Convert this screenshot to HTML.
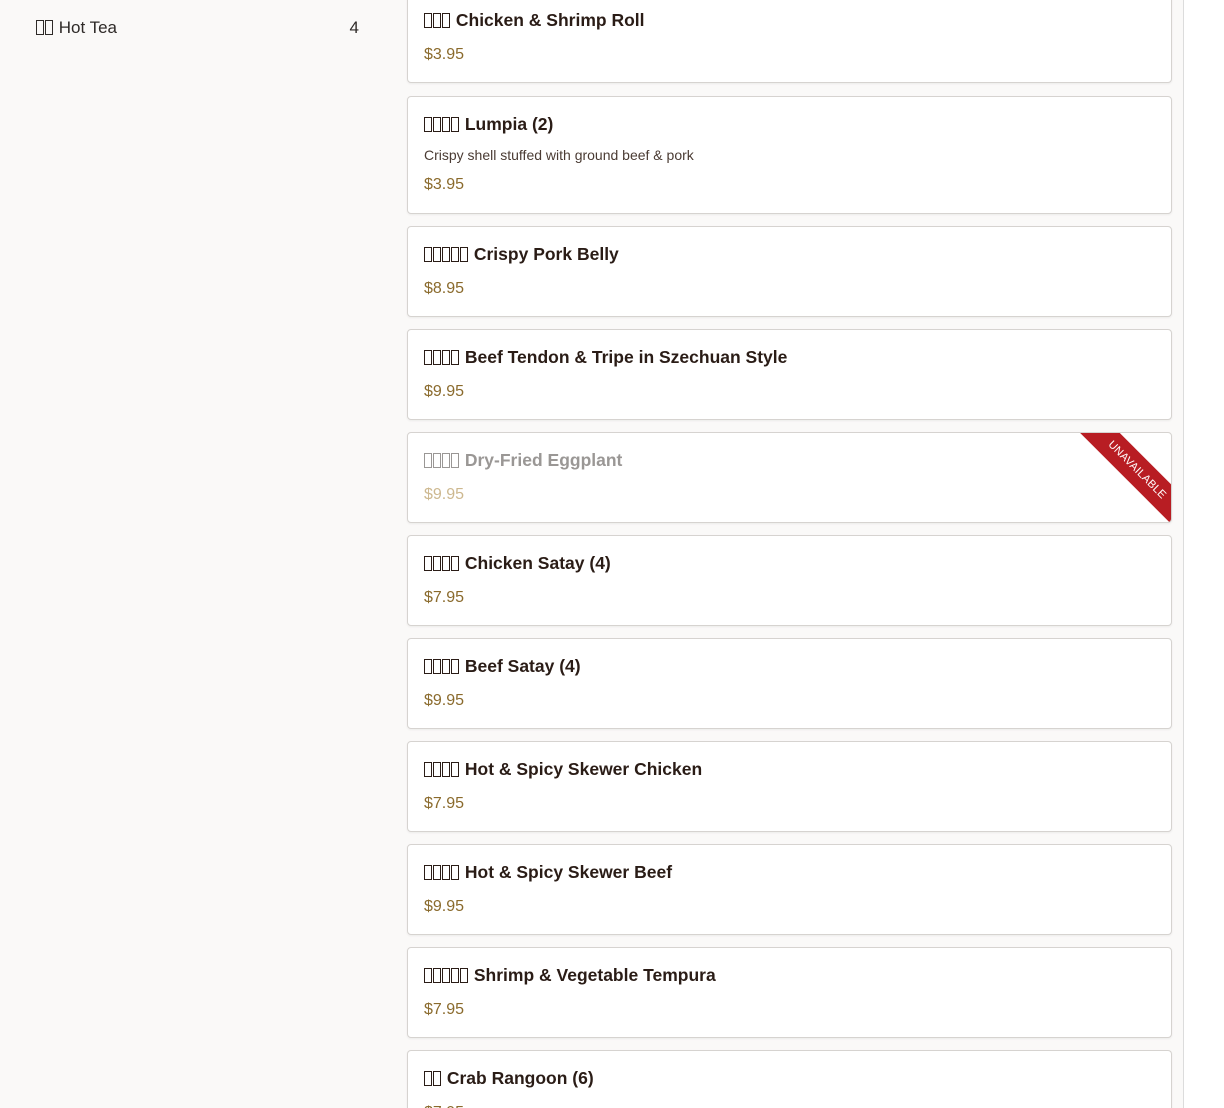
<!DOCTYPE html>
<html><head><meta charset="utf-8"><style>
html,body{margin:0;padding:0;}
body{width:1224px;height:1108px;overflow:hidden;background:#fff;font-family:"Liberation Sans","Noto Sans CJK SC",sans-serif;position:relative;}
.main{position:absolute;left:0;top:0;width:1183px;height:1108px;background:#faf9f8;border-right:1px solid #dcdcdc;}
.side{position:absolute;left:36px;top:18px;width:323px;font-size:17px;color:#2e2a28;}
.side .n{position:absolute;right:0;top:0;}
.t{display:inline-block;width:8px;height:15px;border:1px solid currentColor;box-sizing:border-box;margin-right:1px;vertical-align:-2px;}
.card{position:absolute;left:407px;width:765px;height:91px;box-sizing:border-box;background:#fff;border:1px solid #d6d3d0;border-radius:4px;overflow:hidden;box-shadow:0 1px 2px rgba(0,0,0,.06);}
.ti{position:absolute;left:16px;top:17px;font-size:17.5px;font-weight:bold;color:#2a1c16;white-space:nowrap;}
.pr{position:absolute;left:16px;top:53px;font-size:16px;color:#8a6a2c;}
.ds{position:absolute;left:16px;top:50px;font-size:14px;color:#4a3b33;}
.un .ti{color:#9a9795;}
.un .pr{color:#cdb88f;}
.rib{position:absolute;right:-46px;top:23px;width:160px;height:28px;background:#b81d23;color:#fff;font-size:11px;text-align:center;line-height:28px;transform:rotate(45deg);letter-spacing:.3px;}
</style></head><body>
<div class="main"></div>
<div class="side"><span class="t"></span><span class="t"></span> Hot Tea<span class="n">4</span></div>

<div class="card" style="top:-8px"><div class="ti"><span class="t"></span><span class="t"></span><span class="t"></span> Chicken &amp; Shrimp Roll</div><div class="pr">$3.95</div></div>
<div class="card" style="top:96px;height:118px"><div class="ti"><span class="t"></span><span class="t"></span><span class="t"></span><span class="t"></span> Lumpia (2)</div><div class="ds">Crispy shell stuffed with ground beef &amp; pork</div><div class="pr" style="top:79px">$3.95</div></div>
<div class="card" style="top:226px"><div class="ti"><span class="t"></span><span class="t"></span><span class="t"></span><span class="t"></span><span class="t"></span> Crispy Pork Belly</div><div class="pr">$8.95</div></div>
<div class="card" style="top:329px"><div class="ti"><span class="t"></span><span class="t"></span><span class="t"></span><span class="t"></span> Beef Tendon &amp; Tripe in Szechuan Style</div><div class="pr">$9.95</div></div>
<div class="card un" style="top:432px"><div class="ti"><span class="t"></span><span class="t"></span><span class="t"></span><span class="t"></span> Dry-Fried Eggplant</div><div class="pr">$9.95</div><div class="rib">UNAVAILABLE</div></div>
<div class="card" style="top:535px"><div class="ti"><span class="t"></span><span class="t"></span><span class="t"></span><span class="t"></span> Chicken Satay (4)</div><div class="pr">$7.95</div></div>
<div class="card" style="top:638px"><div class="ti"><span class="t"></span><span class="t"></span><span class="t"></span><span class="t"></span> Beef Satay (4)</div><div class="pr">$9.95</div></div>
<div class="card" style="top:741px"><div class="ti"><span class="t"></span><span class="t"></span><span class="t"></span><span class="t"></span> Hot &amp; Spicy Skewer Chicken</div><div class="pr">$7.95</div></div>
<div class="card" style="top:844px"><div class="ti"><span class="t"></span><span class="t"></span><span class="t"></span><span class="t"></span> Hot &amp; Spicy Skewer Beef</div><div class="pr">$9.95</div></div>
<div class="card" style="top:947px"><div class="ti"><span class="t"></span><span class="t"></span><span class="t"></span><span class="t"></span><span class="t"></span> Shrimp &amp; Vegetable Tempura</div><div class="pr">$7.95</div></div>
<div class="card" style="top:1050px;height:58px;border-bottom:none;border-radius:4px 4px 0 0"><div class="ti"><span class="t"></span><span class="t"></span> Crab Rangoon (6)</div><div class="pr">$7.95</div></div>
</body></html>
